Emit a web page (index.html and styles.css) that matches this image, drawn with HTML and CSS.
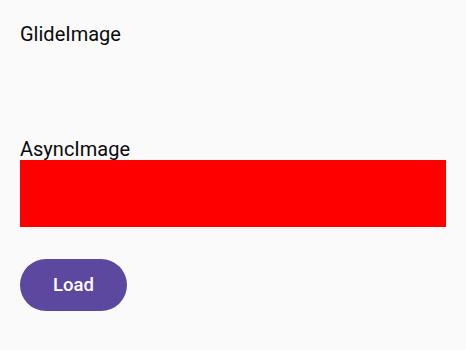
FILE: index.html
```html
<!DOCTYPE html>
<html>
<head>
<meta charset="utf-8">
<link rel="stylesheet" href="styles.css">
</head>
<body>
<main class="screen">
  <p class="label">GlideImage</p>
  <div class="glide-area"></div>
  <p class="label">AsyncImage</p>
  <div class="async-image"></div>
  <button class="load-btn">Load</button>
</main>
</body>
</html>
```
FILE: styles.css
```css
html, body {
  margin: 0;
  padding: 0;
  background: #fafafa;
}
.screen {
  display: flex;
  flex-direction: column;
  align-items: flex-start;
  padding: 23px 20px 0 20px;
  font-family: Roboto, "Noto Sans", sans-serif;
}
.label {
  margin: 0;
  font-size: 20px;
  line-height: 22px;
  color: #0a0a0a;
}
.glide-area {
  height: 93px;
}
.async-image {
  align-self: stretch;
  height: 67px;
  background: #ff0000;
}
.load-btn {
  margin-top: 32px;
  width: 107px;
  height: 52px;
  border: none;
  border-radius: 26px;
  background: #5d48a0;
  color: #ffffff;
  font-family: Roboto, "Noto Sans", sans-serif;
  font-weight: 500;
  font-size: 18.5px;
  padding: 0;
}
```
